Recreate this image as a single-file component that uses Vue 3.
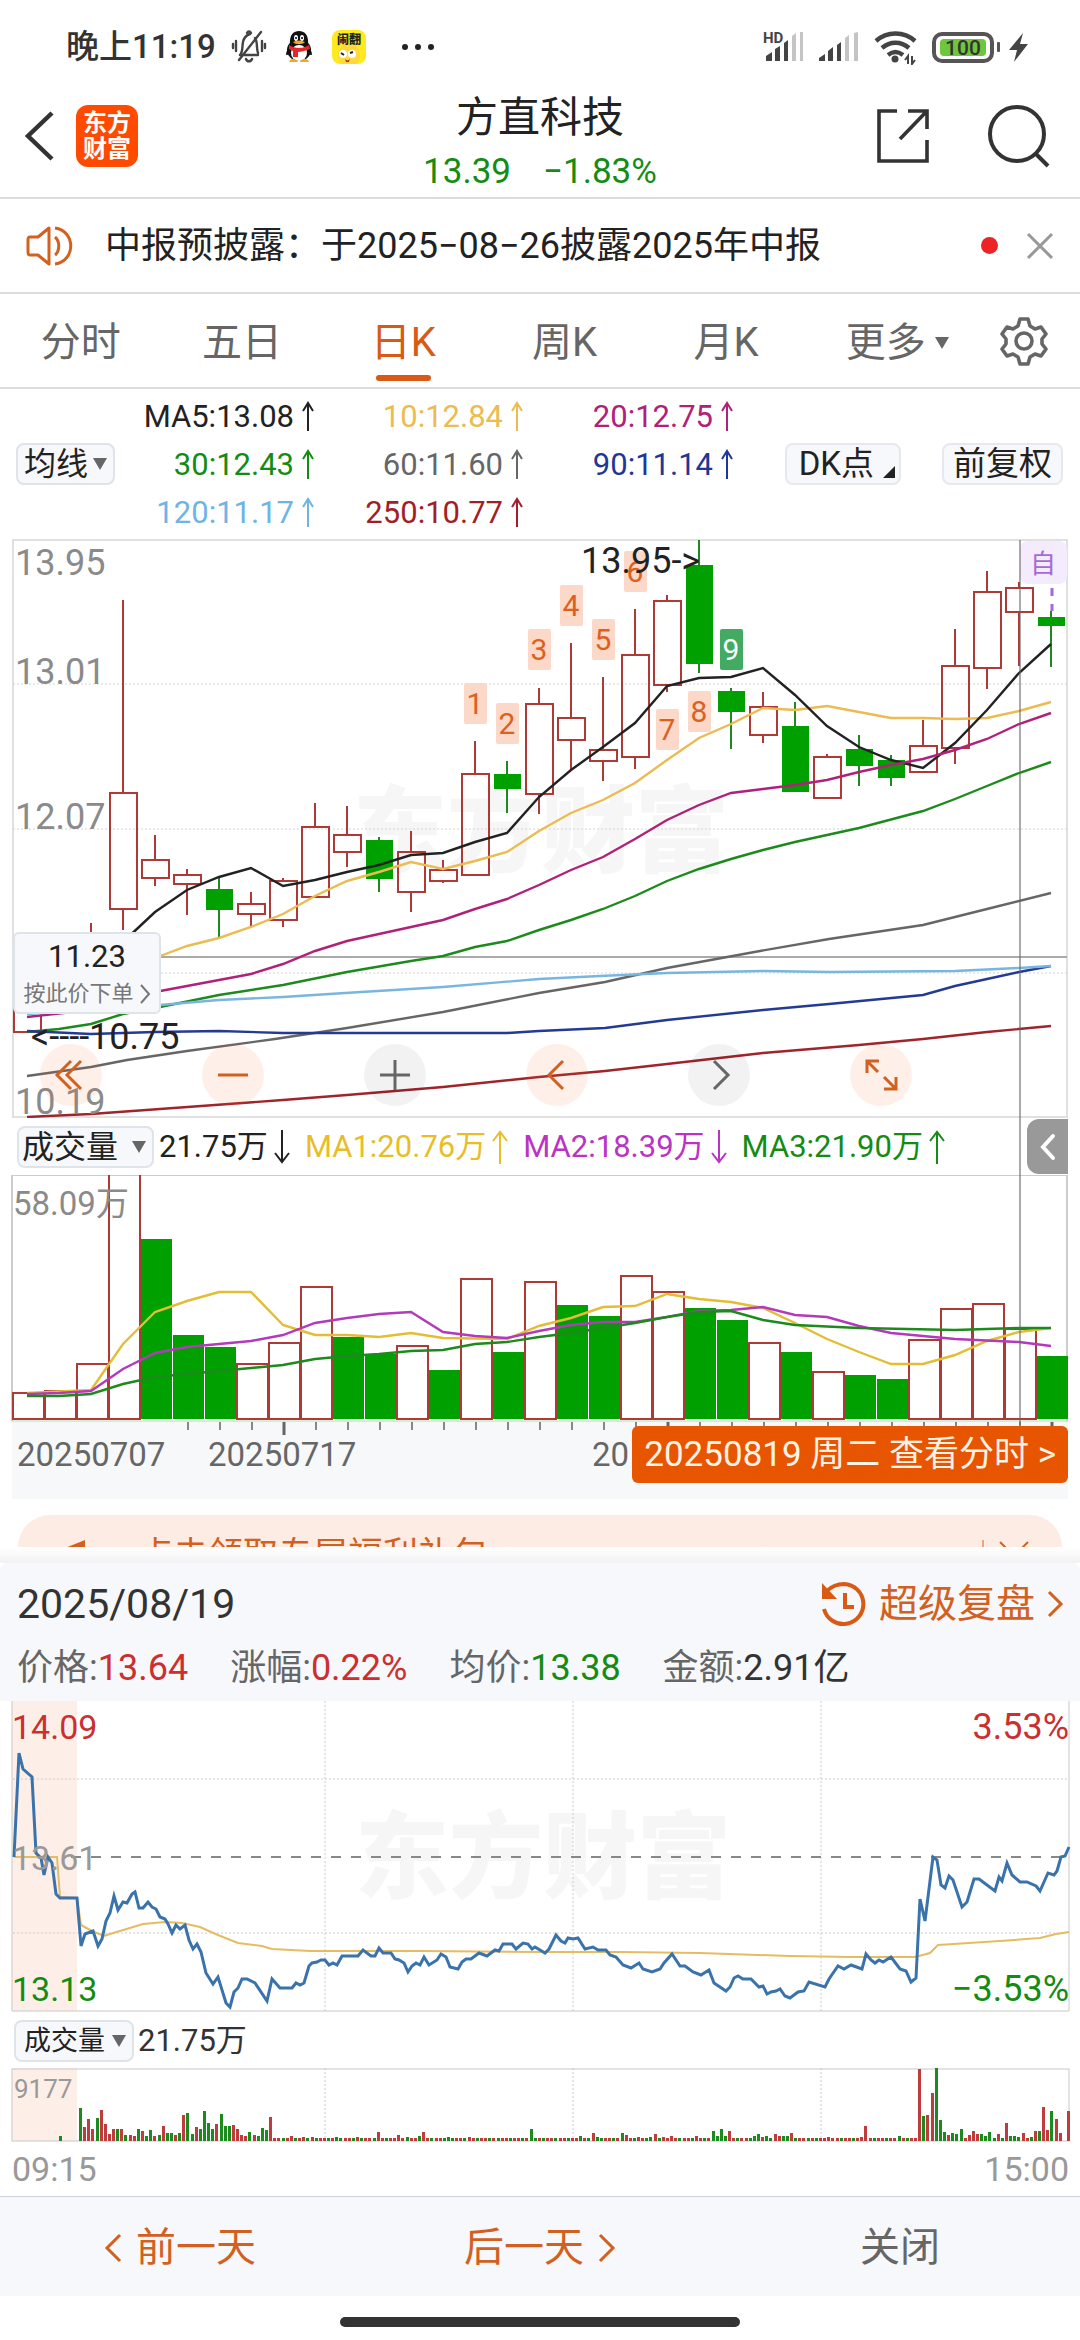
<script setup>
import { ref } from 'vue'

const tabs = ['分时', '五日', '日K', '周K', '月K', '更多']
const active = ref('日K')

const averages = [
  { text: 'MA5:13.08', color: '#222222' },
  { text: '10:12.84', color: '#ecbb52' },
  { text: '20:12.75', color: '#b0217a' },
  { text: '30:12.43', color: '#148c14' },
  { text: '60:11.60', color: '#666666' },
  { text: '90:11.14', color: '#1f3796' },
  { text: '120:11.17', color: '#70b4e2' },
  { text: '250:10.77', color: '#a01f28' }
]

const volumeAverages = [
  { text: '21.75万', up: false, color: '#222222' },
  { text: 'MA1:20.76万', up: true, color: '#e8be28' },
  { text: 'MA2:18.39万', up: false, color: '#bb33c4' },
  { text: 'MA3:21.90万', up: true, color: '#148c14' }
]

const cx = (i) => 27 + 32 * i

// index, high, body top, body bottom, low, falling
const candles = [
  [0, 1000, 1002, 1032, 1032, 0], [2, 923, 940, 1000, 1005, 0],
  [3, 600, 793, 909, 930, 0], [4, 835, 860, 878, 886, 0], [5, 869, 875, 884, 915, 0],
  [6, 876, 889, 910, 938, 1], [7, 892, 904, 914, 928, 0], [8, 878, 881, 920, 927, 0],
  [9, 803, 827, 897, 897, 0], [10, 806, 835, 852, 867, 0], [11, 837, 840, 879, 892, 1],
  [12, 831, 852, 892, 912, 0], [13, 860, 870, 881, 883, 0], [14, 741, 774, 875, 875, 0],
  [15, 761, 774, 789, 813, 1], [16, 688, 704, 794, 814, 0], [17, 643, 718, 740, 769, 0],
  [18, 677, 750, 761, 781, 0], [19, 609, 655, 757, 769, 0], [20, 595, 601, 685, 692, 0],
  [21, 540, 565, 664, 673, 1], [22, 688, 691, 712, 749, 1], [23, 692, 707, 735, 743, 0],
  [24, 702, 726, 792, 792, 1], [25, 754, 757, 798, 798, 0], [26, 735, 749, 766, 786, 1],
  [27, 755, 760, 778, 786, 1], [28, 720, 746, 772, 773, 0], [29, 629, 666, 748, 764, 0],
  [30, 571, 592, 668, 689, 0], [31, 582, 588, 612, 666, 0], [32, 611, 617, 626, 667, 1]
].map(([i, high, top, bottom, low, down]) => ({ x: cx(i), high, top, bottom, low, down }))

const lines = [
  { color: '#ecbb52', pts: '123,972 155,958 187,946 219,938 251,927 283,914 315,896 347,881 379,872 411,862 443,869 475,861 507,852 539,831 571,813 603,800 635,783 667,760 699,738 731,724 763,708 795,710 827,706 859,712 891,718 923,718 955,719 987,718 1019,711 1051,702' },
  { color: '#222222', pts: '123,942 155,912 187,890 219,877 251,868 283,886 315,880 347,872 379,865 411,855 443,853 475,842 507,833 539,797 571,770 603,747 635,723 667,686 699,678 731,677 763,668 795,695 827,726 859,747 891,760 923,768 955,743 987,710 1019,673 1051,644' },
  { color: '#b0217a', pts: '27,1017 91,1010 155,992 187,986 219,980 251,974 283,964 315,951 347,941 379,934 411,927 443,920 475,909 507,899 539,885 571,870 603,857 635,839 667,820 699,805 731,793 763,789 795,785 827,780 859,772 891,765 923,759 955,750 987,739 1019,724 1051,713' },
  { color: '#1c8a1c', pts: '27,1032 59,1029 91,1024 123,1014 160,1007 219,995 283,985 347,972 411,961 443,956 475,947 507,941 539,930 571,920 603,909 635,896 667,881 699,869 731,859 763,850 795,842 859,828 923,811 955,799 987,786 1019,773 1051,762' },
  { color: '#666666', pts: '27,1076 91,1067 127,1060 187,1051 275,1039 347,1028 443,1012 539,993 605,982 667,968 760,951 829,939 923,925 987,909 1051,893' },
  { color: '#243a94', pts: '27,1031 91,1034 155,1032 219,1031 283,1033 411,1033 507,1033 539,1031 605,1028 667,1020 763,1010 829,1004 923,995 955,986 987,979 1019,972 1051,966' },
  { color: '#78b6e0', pts: '27,1014 160,1005 219,1000 283,997 345,993 443,987 539,979 600,976 667,973 763,971 829,972 955,971 1019,968 1051,966' },
  { color: '#a0242c', pts: '27,1117 91,1114 160,1109 283,1100 347,1095 443,1087 539,1077 605,1071 667,1064 763,1053 859,1045 923,1039 987,1032 1051,1026' }
]

// nine-turn sequence marks: candle index, top edge
const marks = [
  [14, 683], [15, 703], [16, 629], [17, 585], [18, 619], [19, 551], [20, 709], [21, 691], [22, 629]
].map(([i, y], n) => ({ x: cx(i), y, n: n + 1 }))

const axisLabels = [
  ['13.95', 575], ['13.01', 684], ['12.07', 829], ['10.19', 1114]
]

// top edge and falling flag for each daily volume bar
const volumes = [
  [1393, 0], [1391, 0], [1364, 0], [1173, 0], [1239, 1], [1335, 1], [1347, 1], [1364, 0],
  [1343, 0], [1287, 0], [1337, 1], [1354, 1], [1346, 0], [1370, 1], [1279, 0], [1352, 1],
  [1282, 0], [1305, 1], [1316, 1], [1276, 0], [1292, 0], [1308, 1], [1320, 1], [1343, 0],
  [1352, 1], [1372, 0], [1375, 1], [1379, 1], [1340, 0], [1309, 0], [1304, 0], [1329, 0], [1356, 1]
].map(([top, down], i) => ({ x: cx(i), top, down }))

const volumeLines = [
  { color: '#e3bd33', pts: '27,1393 91,1390 123,1344 155,1312 187,1301 219,1292 251,1292 283,1325 315,1335 347,1335 379,1337 411,1333 443,1338 507,1339 539,1326 571,1318 603,1307 635,1306 667,1294 699,1299 731,1302 763,1308 795,1323 827,1339 859,1352 891,1364 923,1364 955,1355 987,1341 1019,1332 1051,1328' },
  { color: '#b23abb', pts: '27,1394 59,1393 91,1391 123,1369 155,1353 187,1347 251,1341 283,1335 315,1323 347,1318 379,1314 411,1312 443,1332 475,1336 507,1338 539,1331 571,1325 603,1322 635,1322 667,1317 699,1311 731,1310 763,1307 795,1315 827,1317 859,1326 891,1333 955,1339 1019,1342 1051,1346' },
  { color: '#1c8a1c', pts: '27,1396 59,1396 91,1394 123,1384 155,1377 187,1374 219,1371 251,1368 283,1365 315,1359 347,1356 379,1354 411,1351 443,1350 475,1344 507,1342 539,1337 571,1333 603,1328 635,1323 667,1317 699,1312 731,1311 763,1320 795,1325 859,1328 955,1330 1019,1328 1051,1328' }
]

const ticks = Array.from({ length: 28 }, (_, k) => ({ x: cx(k + 5) + 1, major: k + 5 === 8 || k + 5 === 20 || k + 5 === 32 }))

const priceLine = '14,1857 19,1753 23,1769 32,1777 36,1853 41,1858 44,1875 48,1857 52,1863 56,1894 60,1898 77,1898 81,1946 85,1934 93,1931 98,1946 102,1939 106,1921 110,1913 114,1896 118,1910 123,1902 127,1903 132,1894 135,1892 139,1908 143,1908 148,1902 152,1907 156,1909 160,1917 165,1919 168,1924 172,1933 176,1925 180,1929 185,1925 189,1940 193,1949 197,1944 201,1952 206,1973 213,1984 218,1977 226,2003 230,2007 234,1992 238,1988 242,1979 247,1979 255,1983 267,2001 272,1979 280,1988 292,1988 296,1983 300,1985 304,1983 309,1966 312,1963 317,1962 321,1960 325,1960 329,1965 333,1963 337,1965 342,1956 358,1956 363,1950 371,1956 375,1956 379,1948 383,1953 391,1953 395,1959 399,1960 404,1963 408,1972 412,1966 416,1963 420,1965 424,1957 429,1965 437,1960 441,1954 446,1957 450,1967 458,1969 462,1962 466,1959 471,1959 479,1953 487,1956 495,1950 499,1951 503,1944 512,1944 516,1949 523,1943 528,1944 532,1949 535,1947 540,1950 545,1953 549,1949 556,1935 561,1941 565,1943 568,1938 573,1939 578,1938 585,1949 593,1947 598,1950 606,1950 610,1955 616,1957 623,1965 631,1968 639,1963 643,1969 652,1972 660,1969 664,1963 672,1954 680,1966 685,1966 693,1972 701,1975 709,1970 714,1983 726,1991 730,1987 734,1978 738,1976 743,1979 751,1979 759,1987 763,1986 767,1994 771,1992 776,1991 780,1989 785,1996 790,1998 798,1992 804,1991 809,1982 825,1987 829,1979 838,1966 844,1969 851,1965 862,1969 866,1954 871,1960 875,1963 879,1960 883,1962 891,1957 900,1969 906,1971 911,1982 916,1978 920,1899 925,1921 933,1857 937,1860 941,1885 945,1888 949,1876 953,1880 962,1907 967,1902 974,1879 979,1879 995,1891 999,1877 1002,1881 1007,1863 1012,1875 1020,1882 1027,1882 1036,1886 1040,1891 1048,1873 1054,1875 1057,1871 1061,1857 1065,1856 1069,1847'
const avgLine = '14,1857 57,1857 60,1897 77,1898 81,1925 92,1931 104,1936 110,1934 143,1924 165,1922 182,1923 200,1927 218,1935 238,1943 262,1946 272,1949 310,1951 420,1951 540,1952 620,1952 700,1953 790,1956 850,1957 915,1957 930,1953 938,1945 1000,1941 1040,1938 1056,1934 1069,1932'

// per-minute volume; negative is a falling minute, quiet minutes stay at 3
const minuteHead = [-33, 14, 22, 12, -23, 31, 17, 7, 12, -12, 12, -6, 6, 5, -12, 10, -5, -11, 5, -6, 15, -8, -8, 6, -8, 26, -28, -7, 14, -12, -30, -18, -12, 17, -27, -15, -15, 16, 12, 6, 5, -9, 6, -5, -13, -11, 24]
const minuteSpikes = {
  51: 5, 54: 4, 56: 4, 62: -4, 67: 4, 72: 9, 77: 6, 79: -4, 82: -5, 83: 9, 89: -4, 94: 4, 109: -12,
  121: -5, 124: 8, 125: -4, 131: -8, 132: 6, 135: 4, 138: -4, 139: 7, 141: 4, 143: 5, 149: 5,
  153: -10, 154: -5, 155: -12, 156: -5, 157: 10, 163: -5, 164: -7, 165: 4, 166: -5, 168: 7, 169: 5, 170: -5, 171: -5, 172: 8,
  181: 4, 189: 4, 190: 15, 198: -5, 203: 72, 204: -25, 205: 26, 206: 48, 207: -73, 208: -21, 209: -9, 210: 6, 211: -8, 212: -7, 213: -12,
  214: 3, 215: 6, 216: 10, 217: 7, 218: -7, 219: -5, 220: -9, 221: -3, 222: 7, 223: -3, 224: 18, 225: -5, 226: -5, 227: -4, 228: 8,
  229: 3, 230: -4, 231: 10, 232: -10, 233: 34, 234: 11, 235: -30, 236: 22, 237: 8, 238: 0, 239: 30
}
const minutes = Array.from({ length: 240 }, (_, k) => {
  const v = k < minuteHead.length ? minuteHead[k] : (minuteSpikes[k] ?? ((k * 7) % 11 < 4 ? -3 : 3))
  return { x: Math.round(79 + k * 4.134), h: Math.abs(v), down: v < 0 }
})

const quotes = [
  { label: '价格:', value: '13.64', cls: 'red' },
  { label: '涨幅:', value: '0.22%', cls: 'red' },
  { label: '均价:', value: '13.38', cls: 'green' },
  { label: '金额:', value: '2.91亿', cls: 'dark' }
]
</script>

<template>
  <main class="page">
    <div class="status">
      <span class="clock">晚上11:19</span>
      <svg class="st-bell" width="36" height="36" viewBox="0 0 36 36" fill="none" stroke="#444" stroke-width="2.4" stroke-linecap="round">
        <path d="M9 26h18M9 26c3-3 2-8 3-13 1-5 4-7 7-8M16 4c1-2 3-2 4 0M24 9c3 4 1 10 3 15M30 3L8 31M15 30c1 3 5 3 6 0M5 12v10M2 15v4M31 12v10M34 15v4" />
      </svg>
      <svg class="st-qq" width="34" height="36" viewBox="0 0 34 36">
        <ellipse cx="17" cy="21" rx="12" ry="11" fill="#111" />
        <path d="M8 16C7 5 12 2 17 2s10 3 9 14z" fill="#111" />
        <path d="M4 26c0-4 2-7 5-9l3 8zM30 26c0-4-2-7-5-9l-3 8z" fill="#111" />
        <ellipse cx="17" cy="24" rx="8" ry="8" fill="#fff" />
        <ellipse cx="14" cy="9" rx="2" ry="3" fill="#fff" /><ellipse cx="20" cy="9" rx="2" ry="3" fill="#fff" />
        <circle cx="14" cy="9" r="1" /><circle cx="20" cy="9" r="1" />
        <path d="M11 13c4-2 8-2 12 0-3 3-9 3-12 0z" fill="#f5a81c" />
        <path d="M7 16c6 4 14 4 20 0l1 4c-5 2-9 3-12 3v5h-5v-6l-4-2z" fill="#e5262b" />
        <path d="M8 31c3-2 7-1 8 2H7zM26 31c-3-2-7-1-8 2h9z" fill="#f5a81c" />
      </svg>
      <svg class="st-app" width="34" height="34" viewBox="0 0 34 34">
        <rect width="34" height="34" rx="8" fill="#ffea1f" />
        <circle cx="17" cy="25" r="11" fill="#ffd83b" />
        <text x="17" y="14" font-size="12" font-weight="900" text-anchor="middle" fill="#222">闹翻</text>
        <circle cx="11" cy="24" r="4" fill="#fff" /><circle cx="20" cy="24" r="4" fill="#fff" />
        <path d="M9 23l3 2M18 23l3-1" stroke="#222" stroke-width="2" /><path d="M13 29c2 2 4 2 5-1l-1 4h-3z" fill="#b5332c" />
      </svg>
      <svg class="st-dots" width="36" height="8" viewBox="0 0 36 8" fill="#222"><circle cx="5" cy="4" r="3" /><circle cx="18" cy="4" r="3" /><circle cx="31" cy="4" r="3" /></svg>
      <svg class="st-right" width="270" height="36" viewBox="0 0 270 36">
        <text x="1" y="14" font-size="15" font-weight="700" fill="#444">HD</text>
        <g fill="#444">
          <path d="M4 27l6-4v9H4zM13 20l5-3v15h-5zM22 14l4-3v21h-4z" /><path d="M30 7l4-3v28h-4zM38 3h3v29h-3z" fill="#c4c4c4" />
          <path d="M57 29l6-4v7h-6zM66 22l5-4v14h-5zM75 16l4-3v19h-4z" /><path d="M83 9l4-3v26h-4zM92 4l4-1v29h-4z" fill="#c4c4c4" />
        </g>
        <g fill="none" stroke="#444" stroke-width="4.4">
          <path d="M114 12c11-10 28-10 39 0M120 19c8-7 19-7 27 0M126 26c5-4 10-4 15 0" />
        </g>
        <circle cx="133" cy="30" r="3.5" fill="#444" />
        <path d="M146 35V27l-3 4M150 27v8l3-4" stroke="#444" stroke-width="2" fill="none" />
        <rect x="172" y="5" width="58" height="27" rx="8" fill="#fff" stroke="#555" stroke-width="4" />
        <rect x="178" y="10" width="46" height="17" rx="4" fill="#6dc63c" />
        <text x="201" y="26" font-size="21" font-weight="500" text-anchor="middle" fill="#333">100</text>
        <rect x="235" y="13" width="3" height="10" rx="1" fill="#555" />
        <path d="M261 4L247 21h8l-3 12 14-18h-8z" fill="#444" />
      </svg>
    </div>

    <header class="header">
      <button class="icon-btn" aria-label="返回">
        <svg width="36" height="52" viewBox="0 0 36 52" fill="none" stroke="#333" stroke-width="4.5"><path d="M32 3L8 26l24 23" /></svg>
      </button>
      <span class="logo">东方<br>财富</span>
      <div class="title">
        <h1>方直科技</h1>
        <p><span>13.39</span><span>−1.83%</span></p>
      </div>
      <button class="icon-btn share" aria-label="分享">
        <svg width="56" height="58" viewBox="0 0 56 58" fill="none" stroke="#333" stroke-width="3.6"><path d="M22 4H4v50h48V33M33 4h19v18M51 5L25 32" /></svg>
      </button>
      <button class="icon-btn" aria-label="搜索">
        <svg width="66" height="66" viewBox="0 0 66 66" fill="none" stroke="#333" stroke-width="4"><circle cx="31" cy="31" r="27" /><path d="M49 50l13 13" /></svg>
      </button>
    </header>

    <section class="news">
      <svg width="48" height="42" viewBox="0 0 48 42" fill="none" stroke="#d2601f" stroke-width="3"><path d="M23 3L12 12H4c-2 0-2 1-2 3v12c0 2 0 3 2 3h8l11 9zM29 12c5 4 5 14 0 18M29 3c21 3 21 33 0 36" stroke-linejoin="round" /></svg>
      <a href="#">中报预披露：于2025−08−26披露2025年中报</a>
      <i class="dot"></i>
      <button class="icon-btn" aria-label="关闭公告">
        <svg width="28" height="28" viewBox="0 0 28 28" stroke="#999" stroke-width="3"><path d="M2 2l24 24M26 2L2 26" /></svg>
      </button>
    </section>

    <nav class="tabs">
      <button v-for="t in tabs" :key="t" :class="{ on: t === active, more: t === '更多' }" @click="active = t">
        <span>{{ t }}</span>
        <svg v-if="t === '更多'" width="14" height="12" viewBox="0 0 14 12" fill="#666"><path d="M0 0h14L7 12z" /></svg>
      </button>
      <button class="gear" aria-label="设置">
        <svg width="48" height="50" viewBox="0 0 48 50" fill="none" stroke="#666" stroke-width="3.6" stroke-linejoin="round">
          <path d="M20 3h8l2 7 5 3 6-2 5 7-4 5v5l4 5-5 7-6-2-5 3-2 7h-8l-2-7-5-3-6 2-5-7 4-5v-5l-4-5 5-7 6 2 5-3z" /><circle cx="24" cy="25" r="8" />
        </svg>
      </button>
    </nav>

    <section class="legend">
      <span class="drop small"><select aria-label="指标"><option>均线</option></select><i></i></span>
      <ul>
        <li v-for="a in averages" :key="a.text" :style="{ color: a.color }">
          {{ a.text }}
          <svg width="13" height="30" viewBox="0 0 13 30" fill="none" stroke="currentColor" stroke-width="2"><path d="M6 30V2M1 10l5-8 5 8" /></svg>
        </li>
      </ul>
      <button class="chip dk">DK点<svg width="12" height="12" viewBox="0 0 12 12" fill="#222"><path d="M12 0v12H0z" /></svg></button>
      <button class="chip">前复权</button>
    </section>

    <section class="daily">
      <div class="layer">
        <svg class="chart" viewBox="0 539 1080 579">
          <text class="mark" x="541" y="865">东方财富</text>
          <rect x="13" y="540" width="1054" height="577" fill="none" stroke="#e0e0e0" stroke-width="2" />
          <path d="M13 684H1067M13 829H1067M13 973H1067" stroke="#d4d4d4" stroke-width="1" stroke-dasharray="2 2" />
          <g v-for="c in candles" :key="c.x">
            <template v-if="c.down">
              <path :d="`M${c.x} ${c.high}V${c.low}`" stroke="#1c8a1c" stroke-width="2" />
              <rect :x="c.x - 13" :y="c.top" width="27" :height="c.bottom - c.top" fill="#00a000" />
            </template>
            <template v-else>
              <path :d="`M${c.x} ${c.high}V${c.top}M${c.x} ${c.bottom}V${c.low}`" stroke="#ae3a38" stroke-width="2" />
              <rect :x="c.x - 13" :y="c.top" width="27" :height="c.bottom - c.top" fill="none" stroke="#ae3a38" stroke-width="2" />
            </template>
          </g>
          <path d="M13 957H1067" stroke="#aaa" stroke-width="2" />
          <g v-for="m in marks" :key="m.n">
            <rect :x="m.x - 11" :y="m.y" width="23" height="41" rx="2" :fill="m.n === 9 ? '#43aa63' : '#fcd8c8'" />
            <text :x="m.x" :y="m.y + 31" font-size="30" text-anchor="middle" :fill="m.n === 9 ? '#fff' : '#dd601e'">{{ m.n }}</text>
          </g>
          <polyline v-for="l in lines" :key="l.color" :points="l.pts" fill="none" :stroke="l.color" stroke-width="2.4" />
          <text v-for="a in axisLabels" :key="a[0]" x="15" :y="a[1]" font-size="36" fill="#8a8a8a">{{ a[0] }}</text>
          <text x="581" y="573" font-size="36" fill="#222">13.95-></text>
          <text x="31" y="1049" font-size="36" fill="#222">&lt;----10.75</text>
          <rect x="1020" y="541" width="47" height="43" rx="8" fill="#f4ebfd" />
          <text x="1043" y="573" font-size="26" text-anchor="middle" fill="#a56ad6">自</text>
          <path d="M1052 588V611" stroke="#a56ad6" stroke-width="3" stroke-dasharray="8 8" />
        </svg>
        <button class="order"><b>11.23</b><span>按此价下单<svg width="12" height="20" viewBox="0 0 12 20" fill="none" stroke="#777" stroke-width="2"><path d="M2 1l8 9-8 9" /></svg></span></button>
        <div class="controls">
          <button aria-label="最左"><svg viewBox="0 0 62 62" stroke="#d2601f"><path d="M31 17L17 31l14 14M41 17L27 31l14 14" /></svg></button>
          <button aria-label="缩小"><svg viewBox="0 0 62 62" stroke="#d2601f"><path d="M16 31h30" /></svg></button>
          <button class="gray" aria-label="放大"><svg viewBox="0 0 62 62" stroke="#666"><path d="M16 31h30M31 16v30" /></svg></button>
          <button aria-label="左移"><svg viewBox="0 0 62 62" stroke="#d2601f"><path d="M37 17L23 31l14 14" /></svg></button>
          <button class="gray" aria-label="右移"><svg viewBox="0 0 62 62" stroke="#666"><path d="M26 17l14 14-14 14" /></svg></button>
          <button aria-label="全屏"><svg viewBox="0 0 62 62" stroke="#d2601f"><path d="M17 29V17h12M17 17l11 11M46 33v12H34M46 45L34 33" /></svg></button>
        </div>
      </div>

      <div class="vol-legend">
        <span class="drop"><select aria-label="副图指标"><option>成交量</option></select><i></i></span>
        <span v-for="v in volumeAverages" :key="v.text" class="va" :style="{ color: v.color }">{{ v.text }}
          <svg width="16" height="34" viewBox="0 0 16 34" fill="none" stroke="currentColor" stroke-width="2"><path :d="v.up ? 'M8 34V2M1 11l7-9 7 9' : 'M8 0v32M1 23l7 9 7-9'" /></svg>
        </span>
        <button class="fold" aria-label="展开"><svg width="16" height="28" viewBox="0 0 16 28" fill="none" stroke="#fff" stroke-width="4" stroke-linecap="round"><path d="M13 3L3 14l10 11" /></svg></button>
      </div>

      <div class="layer">
        <svg class="chart" viewBox="0 1175 1080 325">
          <rect x="12" y="1421" width="1056" height="78" fill="#f7f8fa" />
          <path d="M12 1421V1175H1067V1421" fill="none" stroke="#ccc" stroke-width="2" />
          <path d="M12 1421H1068" stroke="#b5dcb5" stroke-width="1" />
          <template v-for="v in volumes" :key="v.x">
            <rect v-if="v.down" :x="v.x - 14" :y="v.top" width="31" :height="1419 - v.top" fill="#00a000" />
            <rect v-else :x="v.x - 14" :y="v.top" width="31" :height="1419 - v.top" fill="none" stroke="#ae3a38" stroke-width="2" />
          </template>
          <polyline v-for="l in volumeLines" :key="l.color" :points="l.pts" fill="none" :stroke="l.color" stroke-width="2.4" />
          <path v-for="t in ticks" :key="t.x" :d="`M${t.x} 1422v${t.major ? 13 : 8}`" :stroke="t.major ? '#666' : '#888'" :stroke-width="t.major ? 3 : 2" />
          <text x="13" y="1215" font-size="33" fill="#8a8a8a">58.09万</text>
          <g font-size="33" fill="#666"><text x="17" y="1466">20250707</text><text x="208" y="1466">20250717</text><text x="592" y="1466">20</text></g>
        </svg>
        <button class="day">20250819 周二 查看分时 ></button>
      </div>
      <i class="cross"></i>
    </section>

    <aside class="promo">
      <div>
        <svg width="40" height="36" viewBox="0 0 40 36" fill="#d2601f"><path d="M24 2v30L4 24V10z" /></svg>
        <span>点击领取专属福利礼包</span>
        <svg width="60" height="36" viewBox="0 0 60 36" fill="none" stroke="#d2601f" stroke-width="2"><path d="M1 2v32" stroke-width="1" /><path d="M18 4l28 28M46 4L18 32" /></svg>
      </div>
    </aside>
    <div class="shade"></div>

    <section class="panel">
      <div class="replay">
        <time>2025/08/19</time>
        <a href="#">
          <svg width="46" height="46" viewBox="0 0 46 46" fill="none" stroke="#d85a14" stroke-width="4"><path d="M6 10C12 4 17 3 23 3a20 20 0 1 1-20 25M24 12v14h9" /><path d="M1 2v16h15z" fill="#d85a14" stroke="none" /></svg>
          超级复盘
          <svg width="17" height="28" viewBox="0 0 17 28" fill="none" stroke="#d2601f" stroke-width="3"><path d="M2 2l12 12L2 26" /></svg>
        </a>
      </div>
      <dl>
        <div v-for="q in quotes" :key="q.label"><dt>{{ q.label }}</dt><dd :class="q.cls">{{ q.value }}</dd></div>
      </dl>
    </section>

    <svg class="chart" viewBox="0 1701 1080 312">
      <rect x="12" y="1701" width="65" height="310" fill="#fdeee8" />
      <text class="mark" x="543" y="1891">东方财富</text>
      <path d="M325 1701V2011M573 1701V2011M821 1701V2011M13 1779H1069M13 1933H1069" stroke="#ccc" stroke-width="1" stroke-dasharray="2 2" />
      <path d="M12 1701V2011H1069V1701" fill="none" stroke="#c8c8c8" stroke-width="1" />
      <path d="M71 1857H1069" stroke="#888" stroke-width="2" stroke-dasharray="10 10" />
      <polyline :points="avgLine" fill="none" stroke="#e6bc62" stroke-width="2" />
      <polyline :points="priceLine" fill="none" stroke="#3a72ac" stroke-width="3" />
      <g font-size="34">
        <text x="12" y="1739" fill="#cb2f2f">14.09</text>
        <text x="12" y="1870" fill="#999">13.61</text>
        <text x="12" y="2001" fill="#148c14">13.13</text>
      </g>
      <g font-size="36" text-anchor="end">
        <text x="1069" y="1739" fill="#cb2f2f">3.53%</text>
        <text x="1069" y="2001" fill="#148c14">−3.53%</text>
      </g>
    </svg>
    <div class="minute-legend">
      <span class="drop mini"><select aria-label="分时副图"><option>成交量</option></select><i></i></span>
      <span>21.75万</span>
    </div>
    <svg class="chart" viewBox="0 2068 1080 74">
      <rect x="12" y="2068" width="65" height="73" fill="#fdeee8" />
      <path d="M325 2068V2141M573 2068V2141M821 2068V2141" stroke="#ccc" stroke-width="1" stroke-dasharray="2 2" />
      <rect x="12" y="2069" width="1057" height="72" fill="none" stroke="#c8c8c8" stroke-width="1" />
      <rect x="59" y="2136" width="3" height="5" fill="#1c8a1c" />
      <rect v-for="m in minutes" :key="m.x" :x="m.x" :y="2141 - m.h" width="3" :height="m.h" :fill="m.down ? '#1c8a1c' : '#c03c3c'" />
      <text x="14" y="2098" font-size="26" fill="#999">9177</text>
    </svg>
    <div class="times"><time>09:15</time><time>15:00</time></div>

    <footer class="foot">
      <button><svg width="18" height="30" viewBox="0 0 18 30" fill="none" stroke="#d2601f" stroke-width="3"><path d="M16 2L3 15l13 13" /></svg>前一天</button>
      <button>后一天<svg width="18" height="30" viewBox="0 0 18 30" fill="none" stroke="#d2601f" stroke-width="3"><path d="M2 2l13 13L2 28" /></svg></button>
      <button class="close">关闭</button>
    </footer>
    <div class="home"><i></i></div>
  </main>
</template>

<style>
body { background: #fff; }
</style>

<style scoped>
.page { font-family: Roboto, "Noto Sans CJK SC", sans-serif; color: #222; background: #fff; overflow: hidden; }
.page * { box-sizing: border-box; }
button { font: inherit; color: inherit; border: 0; background: none; padding: 0; margin: 0; }
a { color: inherit; text-decoration: none; }
svg { flex: none; }
.icon-btn { display: flex; }
.chart { display: block; width: 100%; height: auto; font-family: Roboto, "Noto Sans CJK SC", sans-serif; }
.mark { font-size: 94px; font-weight: 900; text-anchor: middle; fill: #f6f6f6; }

.status { display: flex; align-items: center; height: 78px; padding: 16px 48px 0 66px; }
.clock { font-size: 33px; font-weight: 500; line-height: 40px; color: #333; }
.st-bell { margin-left: 15px; }
.st-qq { margin-left: 15px; }
.st-app { margin-left: 16px; }
.st-dots { margin-left: 34px; }
.st-right { margin-left: auto; }

.header { position: relative; display: flex; align-items: center; height: 121px; padding: 0 28px 4px 20px; border-bottom: 2px solid #dcdcdc; }
.logo { width: 62px; height: 62px; margin-left: 20px; padding-top: 5px; border-radius: 12px; background: #ff4a00; color: #fff; font-size: 24px; font-weight: 700; line-height: 26px; text-align: center; }
.title { position: absolute; left: 0; right: 0; top: 14px; text-align: center; pointer-events: none; }
h1 { margin: 0; font-size: 42px; font-weight: 400; line-height: 52px; }
.title p { display: flex; justify-content: center; gap: 32px; margin: 0; font-size: 35px; line-height: 56px; color: #148c14; }
.share { margin-left: auto; margin-right: 55px; }

.news { display: flex; align-items: center; height: 95px; padding: 0 26px 0 26px; border-bottom: 2px solid #dcdcdc; }
.news a { margin-left: 31px; font-size: 36px; line-height: 50px; }
.dot { width: 17px; height: 17px; margin-left: auto; margin-right: 28px; border-radius: 50%; background: #ee2323; }

.tabs { display: flex; height: 95px; border-bottom: 2px solid #dcdcdc; color: #666; }
.tabs button { position: relative; flex: 1; display: flex; align-items: center; justify-content: center; gap: 9px; font-size: 40px; line-height: 56px; padding-top: 4px; }
.tabs .more span { margin-left: 20px; }
.tabs .on { color: #d85a14; }
.tabs .on::after { content: ""; position: absolute; bottom: 6px; width: 55px; height: 6px; border-radius: 3px; background: #d85a14; }
.tabs .gear { flex: 0 0 112px; padding-top: 0; }

.legend { display: flex; align-items: center; height: 150px; padding: 0 17px 0 16px; }
.legend ul { flex: 1; display: grid; grid-template-columns: 200px 209px 210px; grid-auto-rows: 48px; margin: 0; padding: 0; list-style: none; }
.legend li { display: flex; align-items: center; justify-content: flex-end; gap: 8px; font-size: 31px; }
.chip { display: flex; align-items: center; justify-content: center; height: 42px; padding: 0 9px; border: 2px solid #e6e8ee; border-radius: 8px; background: #f7f8fb; font-size: 33px; line-height: 38px; }
.dk { margin-right: 41px; gap: 9px; padding: 0 4px 0 12px; }
.dk svg { align-self: flex-end; margin-bottom: 5px; }
.drop { position: relative; display: flex; align-items: center; }
.drop select { appearance: none; width: 137px; height: 42px; padding: 0 0 0 3px; border: 2px solid #dfe3ea; border-radius: 8px; background: #f7f8fb; color: #222; font: 32px/38px Roboto, "Noto Sans CJK SC", sans-serif; }
.drop i { position: absolute; right: 8px; border: 7px solid transparent; border-top: 12px solid #666; border-bottom: 0; pointer-events: none; }
.small select { width: 99px; padding-left: 6px; }
.mini select { width: 120px; padding-left: 8px; font-size: 27px; }

.daily { position: relative; }
.layer { position: relative; }
.order { position: absolute; left: 13px; top: 393px; width: 148px; height: 82px; border: 2px solid #dfe3ea; border-radius: 6px; background: #f7f8fb; display: flex; flex-direction: column; align-items: center; }
.order b { font-size: 31px; font-weight: 400; line-height: 46px; }
.order span { display: flex; align-items: center; gap: 5px; font-size: 22px; line-height: 28px; color: #777; }
.controls { position: absolute; left: 40px; bottom: 12px; display: flex; gap: 100px; }
.controls button { width: 62px; height: 62px; border-radius: 50%; background: rgba(245, 110, 40, .1); }
.controls .gray { background: rgba(0, 0, 0, .05); }
.controls svg { display: block; width: 62px; height: 62px; fill: none; stroke-width: 3; }
.vol-legend { display: flex; align-items: center; height: 57px; padding: 0 12px 0 17px; }
.va { display: flex; align-items: center; gap: 6px; margin-left: 5px; margin-right: 10px; font-size: 31px; line-height: 40px; white-space: nowrap; }
.fold { display: flex; align-items: center; justify-content: center; width: 41px; height: 55px; margin-left: auto; border-radius: 12px 0 0 12px; background: #999; }
.day { position: absolute; right: 12px; top: 251px; height: 57px; padding: 0 12px; border-radius: 6px; background: #e85500; color: #fff3e6; font-size: 35px; line-height: 57px; white-space: nowrap; }
.cross { position: absolute; left: calc(94.4% - 1px); top: 1px; bottom: 75px; width: 2px; background: rgba(100, 100, 100, .55); pointer-events: none; }

.promo { height: 32px; margin: 15px 18px 0; border-radius: 40px 40px 0 0; background: #fdece3; overflow: hidden; }
.promo div { display: flex; align-items: center; height: 82px; padding: 0 20px 0 43px; color: #d2601f; font-size: 35px; line-height: 40px; }
.promo span { margin-left: 37px; }
.promo svg:last-child { margin-left: auto; }
.shade { height: 16px; background: linear-gradient(#fff, #f2f2f2); }

.panel { padding: 14px 16px 0 17px; height: 138px; background: #f7f8fb; border-radius: 8px 8px 0 0; }
.replay { display: flex; align-items: center; justify-content: space-between; height: 54px; font-size: 41px; }
.replay time { color: #333; }
.replay a { display: flex; align-items: center; gap: 12px; font-size: 39px; line-height: 54px; color: #d2601f; }
dl { display: flex; gap: 42px; margin: 12px 0 0; font-size: 36px; line-height: 50px; }
dl div { display: flex; }
dt { color: #666; }
dd { margin: 0; }
.red { color: #cb2f2f; }
.green { color: #148c14; }
.dark { color: #333; }

.minute-legend { display: flex; align-items: center; gap: 4px; height: 55px; padding: 0 14px; font-size: 31px; line-height: 40px; color: #333; }
.times { display: flex; justify-content: space-between; height: 54px; padding: 0 11px 0 12px; font-size: 34px; line-height: 55px; color: #999; }
.foot { display: flex; height: 100px; padding-top: 2px; border-top: 1px solid #cdd3dc; background: #f7f8fb; color: #d2601f; font-size: 40px; line-height: 56px; }
.foot button { flex: 1; display: flex; align-items: center; justify-content: center; gap: 14px; }
.foot .close { color: #666; }
.home { display: flex; justify-content: center; padding: 21px 0 13px; }
.home i { width: 37%; height: 10px; border-radius: 5px; background: #333; }
</style>
